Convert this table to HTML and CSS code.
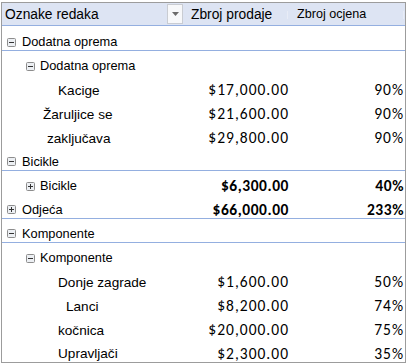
FILE: index.html
```html
<!DOCTYPE html>
<html>
<head>
<meta charset="utf-8">
<link rel="stylesheet" href="styles.css">
</head>
<body>
<div class="pivot">
  <div class="head">
    <div class="hlab"><span>Oznake redaka</span><span class="dd"><svg width="7" height="4" viewBox="0 0 7 4"><path d="M0 0H7L3.5 4Z" fill="#6b6b6b"/></svg></span></div>
    <div class="h2">Zbroj prodaje</div>
    <div class="h3">Zbroj ocjena</div>
  </div>

  <div class="row top first"><div class="lab l0"><svg class="tg" width="9" height="9" viewBox="0 0 9 9"><rect x="0.5" y="0.5" width="8" height="8" rx="1" fill="#eceff3" stroke="#8d8d8d"/><path d="M2 4.5H7" stroke="#333" stroke-width="1"/></svg>Dodatna oprema</div><div class="num"></div><div class="pct"></div></div>
  <div class="row"><div class="lab l1"><svg class="tg" width="9" height="9" viewBox="0 0 9 9"><rect x="0.5" y="0.5" width="8" height="8" rx="1" fill="#eceff3" stroke="#8d8d8d"/><path d="M2 4.5H7" stroke="#333" stroke-width="1"/></svg>Dodatna oprema</div><div class="num"></div><div class="pct"></div></div>
  <div class="row"><div class="lab leaf i56">Kacige</div><div class="num">$17,000.00</div><div class="pct">90%</div></div>
  <div class="row"><div class="lab leaf i41">Žaruljice se</div><div class="num">$21,600.00</div><div class="pct">90%</div></div>
  <div class="row"><div class="lab leaf i45">zaključava</div><div class="num">$29,800.00</div><div class="pct">90%</div></div>
  <div class="row top"><div class="lab l0"><svg class="tg" width="9" height="9" viewBox="0 0 9 9"><rect x="0.5" y="0.5" width="8" height="8" rx="1" fill="#eceff3" stroke="#8d8d8d"/><path d="M2 4.5H7" stroke="#333" stroke-width="1"/></svg>Bicikle</div><div class="num"></div><div class="pct"></div></div>
  <div class="row bold"><div class="lab l1"><svg class="tg" width="9" height="9" viewBox="0 0 9 9"><rect x="0.5" y="0.5" width="8" height="8" rx="1" fill="#eceff3" stroke="#8d8d8d"/><path d="M2 4.5H7M4.5 2V7" stroke="#333" stroke-width="1"/></svg>Bicikle</div><div class="num">$6,300.00</div><div class="pct">40%</div></div>
  <div class="row top bold"><div class="lab l0"><svg class="tg" width="9" height="9" viewBox="0 0 9 9"><rect x="0.5" y="0.5" width="8" height="8" rx="1" fill="#eceff3" stroke="#8d8d8d"/><path d="M2 4.5H7M4.5 2V7" stroke="#333" stroke-width="1"/></svg>Odjeća</div><div class="num">$66,000.00</div><div class="pct">233%</div></div>
  <div class="row top"><div class="lab l0"><svg class="tg" width="9" height="9" viewBox="0 0 9 9"><rect x="0.5" y="0.5" width="8" height="8" rx="1" fill="#eceff3" stroke="#8d8d8d"/><path d="M2 4.5H7" stroke="#333" stroke-width="1"/></svg>Komponente</div><div class="num"></div><div class="pct"></div></div>
  <div class="row"><div class="lab l1"><svg class="tg" width="9" height="9" viewBox="0 0 9 9"><rect x="0.5" y="0.5" width="8" height="8" rx="1" fill="#eceff3" stroke="#8d8d8d"/><path d="M2 4.5H7" stroke="#333" stroke-width="1"/></svg>Komponente</div><div class="num"></div><div class="pct"></div></div>
  <div class="row"><div class="lab leaf i56">Donje zagrade</div><div class="num">$1,600.00</div><div class="pct">50%</div></div>
  <div class="row"><div class="lab leaf i64">Lanci</div><div class="num">$8,200.00</div><div class="pct">74%</div></div>
  <div class="row"><div class="lab leaf i56">kočnica</div><div class="num">$20,000.00</div><div class="pct">75%</div></div>
  <div class="row last"><div class="lab leaf i56">Upravljači</div><div class="num">$2,300.00</div><div class="pct">35%</div></div>
</div>
</body>
</html>
```

FILE: styles.css
```css
html, body {
  margin: 0;
  padding: 0;
  background: #ffffff;
}

.pivot {
  box-sizing: border-box;
  margin: 2px 0 0 1px;
  width: 405px;
  height: 361px;
  border: 1px solid #9c9c9c;
  background: #ffffff;
  font-family: "Liberation Sans", Arial, sans-serif;
  color: #000000;
  overflow: hidden;
}

.head {
  display: flex;
  box-sizing: border-box;
  height: 23px;
  background: #dde4f3;
  border-bottom: 1px solid #94afe0;
  font-size: 13.8px;
  line-height: 16px;
}

.hlab {
  box-sizing: border-box;
  width: 187px;
  display: flex;
  justify-content: space-between;
  align-items: flex-start;
  padding: 3px 6px 0 3px;
}

.hlab > span:first-child {
  padding-top: 1px;
}

.dd {
  box-sizing: border-box;
  width: 16px;
  height: 20px;
  margin-top: -2px;
  background: #f7f8fa;
  border: 1px solid #c9ccd2;
  display: flex;
  align-items: center;
  justify-content: center;
}

.h2 {
  box-sizing: border-box;
  width: 100px;
  padding: 4px 0 0 2px;
  position: relative;
}

.h2::after,
.h3::after {
  content: "";
  position: absolute;
  right: 1px;
  top: 8px;
  height: 8px;
  border-right: 1px solid #e8ecf6;
}

.h3 {
  box-sizing: border-box;
  flex: 1;
  padding: 3px 0 0 8px;
  font-size: 12.6px;
  position: relative;
}

.row {
  display: flex;
  box-sizing: border-box;
  height: 24px;
}

.row.first {
  height: 25px;
}

.row.last {
  height: 23px;
}

.row.top {
  border-bottom: 1px solid #94afe0;
}

.lab {
  box-sizing: border-box;
  width: 187px;
  display: flex;
  align-items: center;
  padding-top: 6px;
  font-size: 12.8px;
  line-height: 16px;
  white-space: nowrap;
}

.first .lab {
  padding-top: 8px;
}

.lab.leaf {
  font-size: 13.6px;
  padding-top: 7px;
}

.tg {
  flex: none;
  margin-right: 6px;
}

.l0 {
  padding-left: 5px;
}

.l1 {
  padding-left: 24px;
}

.l1 .tg {
  margin-right: 5px;
}

.i41 { padding-left: 41px; }
.i45 { padding-left: 45px; }
.i56 { padding-left: 56px; }
.i64 { padding-left: 64px; }

.num,
.pct {
  box-sizing: border-box;
  text-align: right;
  font-family: Carlito, Lato, "Liberation Sans", sans-serif;
  font-size: 15.5px;
  letter-spacing: 1px;
  line-height: 16px;
  padding-top: 7px;
  padding-right: 0;
  color: #000000;
}

.num {
  width: 100px;
}

.pct {
  width: 115px;
}

.bold .num,
.bold .pct {
  font-weight: bold;
  letter-spacing: 0.55px;
}
```
